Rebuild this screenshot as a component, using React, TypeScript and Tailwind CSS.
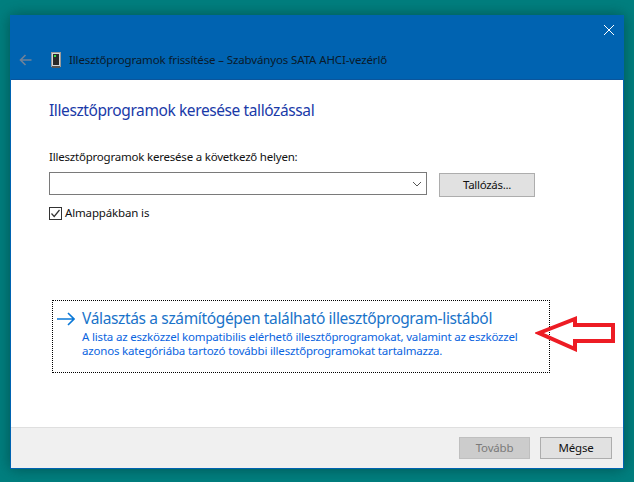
const FONT = "font-['Noto_Sans','Open_Sans',sans-serif]";

function DeviceIcon() {
  return (
    <svg width="10" height="16" viewBox="0 0 10 16" className="shrink-0">
      <rect x="0.5" y="0.5" width="9" height="14" fill="#d8d8d8" stroke="#9a9a9a" />
      <rect x="2" y="2" width="6" height="11" fill="#2a2a2a" />
      <rect x="3" y="3" width="2" height="2" fill="#35e04a" />
      <rect x="1" y="14" width="8" height="2" fill="#555555" />
    </svg>
  );
}

function RedArrow() {
  return (
    <svg width="80" height="36" viewBox="0 0 80 36" className="absolute left-[535px] top-[316px]">
      <path
        d="M4 17 L40 3 L40 9 L78 9 L78 25 L40 25 L40 33 Z"
        fill="none"
        stroke="#ed1c24"
        strokeWidth="4"
        strokeLinejoin="miter"
      />
    </svg>
  );
}

export default function App() {
  return (
    <div className={`${FONT} relative h-[482px] w-[634px] overflow-hidden bg-[#007f7f] pl-[10px] pt-[15px]`}>
      <div className="flex h-[454px] w-[614px] flex-col border border-[#0063b1] bg-white shadow-[0_0_14px_rgba(0,50,50,0.55)]">
        <div className="flex h-[64px] shrink-0 flex-col border-b border-[#0a559c] bg-[#0063b1]">
          <div className="flex justify-end pr-[8px] pt-[8px]">
            <svg width="12" height="12" viewBox="0 0 12 12">
              <path d="M1 1 L11 11 M11 1 L1 11" stroke="#ffffff" strokeWidth="1" fill="none" />
            </svg>
          </div>
          <div className="mt-[16px] flex items-center pl-[8px]">
            <svg width="13" height="12" viewBox="0 0 13 12" className="mr-[19px]">
              <path d="M12.5 6 H1.5 M6.5 1 L1.5 6 L6.5 11" stroke="#6f8299" strokeWidth="1.6" fill="none" />
            </svg>
            <DeviceIcon />
            <span className="ml-[8px] text-[11.5px] leading-[16px] tracking-[-0.13px] text-[#0a1a2a]">
              Illesztőprogramok frissítése – Szabványos SATA AHCI-vezérlő
            </span>
          </div>
        </div>

        <div className="flex min-h-0 flex-1 flex-col pl-[38px]">
          <h1 className="mt-[19px] text-[15.5px] leading-[22px] tracking-[-0.4px] text-[#1a3aa8]">
            Illesztőprogramok keresése tallózással
          </h1>
          <p className="mt-[28px] text-[11.5px] leading-[16px] tracking-[-0.21px] text-[#111111]">
            Illesztőprogramok keresése a következő helyen:
          </p>
          <div className="mt-[7px] flex items-start">
            <div className="flex h-[23px] w-[378px] items-center justify-end border border-[#7a7a7a] bg-white pr-[4px]">
              <svg width="10" height="6" viewBox="0 0 10 6">
                <path d="M1 1 L5 5 L9 1" stroke="#555555" strokeWidth="1" fill="none" />
              </svg>
            </div>
            <button className="ml-[12px] mt-[1px] h-[24px] w-[96px] border border-[#adadad] bg-[#e1e1e1] text-[11.5px] tracking-[-0.3px] text-[#111111]">
              Tallózás...
            </button>
          </div>
          <label className="mt-[9px] flex items-center">
            <span className="flex h-[13px] w-[13px] items-center justify-center border border-[#333333] bg-white">
              <svg width="11" height="11" viewBox="0 0 11 11">
                <path d="M1.5 5.5 L4.2 8.5 L9.5 2" stroke="#333333" strokeWidth="1.2" fill="none" />
              </svg>
            </span>
            <span className="ml-[3px] text-[11.5px] leading-[14px] tracking-[-0.15px] text-[#111111]">Almappákban is</span>
          </label>

          <div className="ml-[3px] mt-[80px] flex h-[73px] w-[498px] items-start border border-dotted border-black pl-[4px] pt-[8px]">
            <svg width="18" height="14" viewBox="0 0 18 14" className="mt-[3px] shrink-0">
              <path d="M0 7 H17 M11 1 L17 7 L11 13" stroke="#0a78d7" strokeWidth="1.6" fill="none" />
            </svg>
            <div className="ml-[7px]">
              <p className="text-[15.5px] leading-[18px] tracking-[-0.35px] text-[#1a73c9]">
                Választás a számítógépen található illesztőprogram-listából
              </p>
              <p className="mt-[3px] text-[11.5px] leading-[14px] tracking-[-0.18px] text-[#0a64e0]">
                A lista az eszközzel kompatibilis elérhető illesztőprogramokat, valamint az eszközzel
                <br />
                azonos kategóriába tartozó további illesztőprogramokat tartalmazza.
              </p>
            </div>
          </div>
        </div>

        <div className="flex h-[41px] shrink-0 items-start justify-end gap-[10px] border-t border-[#dfdfdf] bg-[#f0f0f0] pr-[11px] pt-[9px]">
          <button className="h-[22px] w-[71px] border border-[#bfbfbf] bg-[#cccccc] text-[11.5px] tracking-[-0.2px] text-[#7a7a7a]">
            Tovább
          </button>
          <button className="h-[22px] w-[72px] border border-[#adadad] bg-[#e1e1e1] text-[11.5px] tracking-[-0.2px] text-[#111111]">
            Mégse
          </button>
        </div>
      </div>
      <RedArrow />
    </div>
  );
}
